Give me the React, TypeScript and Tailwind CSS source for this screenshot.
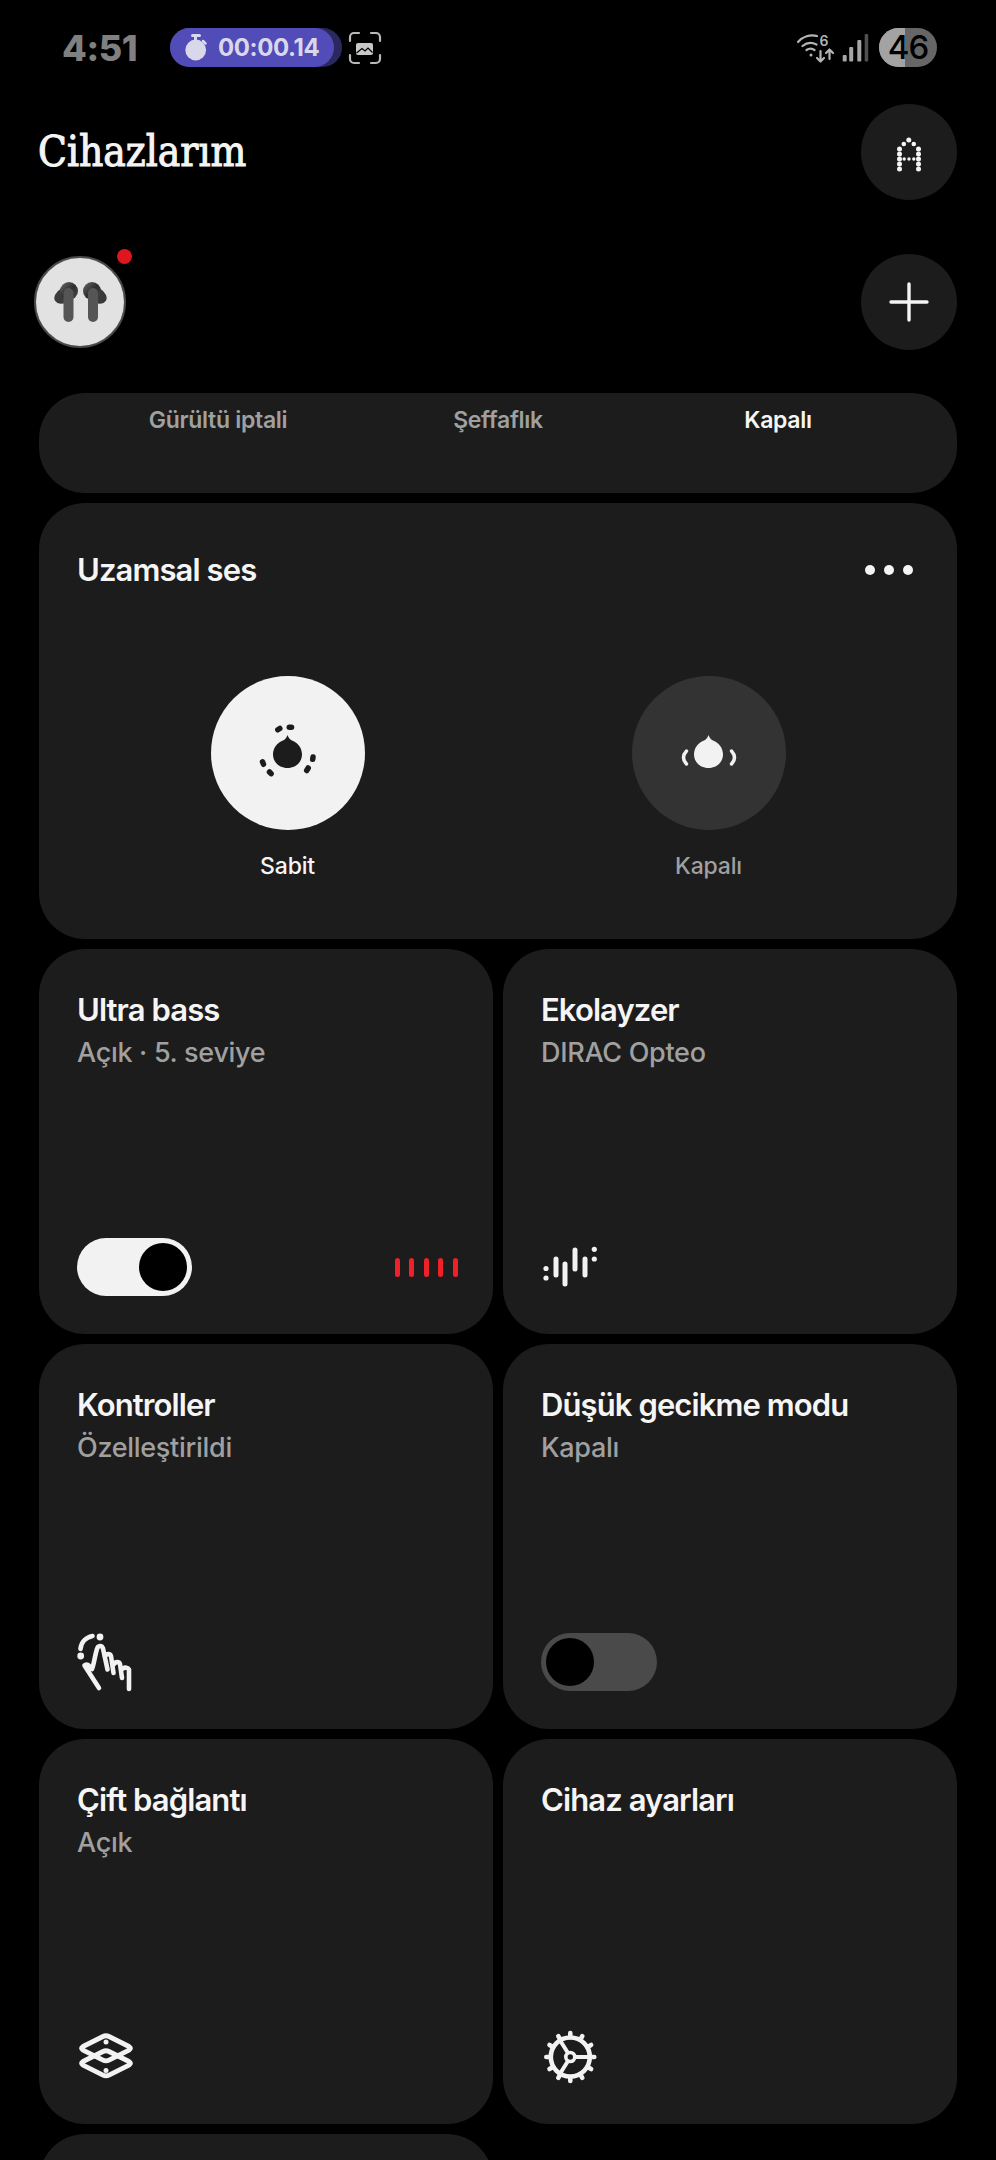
import type { ReactNode } from "react";

const FONT = "font-['Inter','Noto_Sans',sans-serif]";

function StopwatchIcon() {
  return (
    <svg width="24" height="30" viewBox="184 33 24 30" fill="none">
      <rect x="191" y="34" width="10" height="3" rx="1.5" fill="#d9d8ea" />
      <rect x="194" y="36" width="3" height="4" fill="#d9d8ea" />
      <circle cx="195.7" cy="50" r="10.4" fill="#d9d8ea" />
      <path d="M203 41l2.5 2.5" stroke="#d9d8ea" strokeWidth="2.5" strokeLinecap="round" />
    </svg>
  );
}

function ScreenshotIcon() {
  return (
    <svg width="34" height="34" viewBox="348 31 34 34" fill="none">
      <path
        d="M350 41v-4a4 4 0 0 1 4-4h5M371 33h5a4 4 0 0 1 4 4v4M380 55v4a4 4 0 0 1-4 4h-5M359 63h-5a4 4 0 0 1-4-4v-4"
        stroke="#b8b8b8"
        strokeWidth="2.2"
        strokeLinecap="round"
      />
      <path
        d="M358 43h13a2 2 0 0 1 2 2v8a2 2 0 0 1-2 2h-13a2 2 0 0 1-2-2v-8a2 2 0 0 1 2-2z"
        fill="#c8c8c8"
      />
      <path d="M356.5 53l5.5-4.500 3 2.500 3-3 4.500 4.500" stroke="#000" strokeWidth="1.2" fill="none" />
    </svg>
  );
}

function WifiIcon() {
  return (
    <svg width="40" height="32" viewBox="75 32 40 32" fill="none" stroke="#b4b4b4" strokeLinecap="round">
      <path d="M77 42a19 19 0 0 1 19-6" strokeWidth="2.2" />
      <path d="M81.5 46a13 13 0 0 1 14-1.5" strokeWidth="2.2" />
      <path d="M85.5 50a7 7 0 0 1 8 0" strokeWidth="2.2" />
      <circle cx="90" cy="55" r="1.5" fill="#b4b4b4" stroke="none" />
      <text x="98.5" y="46" fontSize="14" fontWeight="600" fill="#b4b4b4" stroke="none" fontFamily="Inter, sans-serif">
        6
      </text>
      <path d="M99.5 51v10M96 58l3.5 3.5 3.5-3.5" strokeWidth="2.2" strokeLinejoin="round" />
      <path d="M108.5 59v-9M105 53l3.5-3.5 3.5 3.5" strokeWidth="2.2" strokeLinejoin="round" />
    </svg>
  );
}

function SignalIcon() {
  return (
    <svg width="28" height="30" viewBox="121 33 28 30">
      <rect x="121.7" y="55" width="4" height="6.5" rx="1" fill="#a6a6a6" />
      <rect x="128.2" y="47" width="4" height="14.5" rx="1" fill="#a6a6a6" />
      <rect x="136.3" y="40" width="4" height="21.5" rx="1" fill="#a6a6a6" />
      <rect x="143.7" y="34" width="3.5" height="27.5" rx="1" fill="#505050" />
    </svg>
  );
}

function Battery() {
  return (
    <div className="relative flex h-[39px] w-[58px] items-center justify-center overflow-hidden rounded-full bg-[#666666]">
      <div className="absolute inset-y-0 left-0 w-[26px] bg-[#a3a3a3]" />
      <span className="relative text-[33px] leading-none font-medium tracking-[-1px] text-black">46</span>
    </div>
  );
}

function DottedA() {
  const left = [150, 155, 160, 165, 170];
  return (
    <svg width="40" height="40" viewBox="169.5 133 40 40" fill="#f4f4f4">
      <circle cx="189.3" cy="141" r="2.5" />
      <circle cx="184.3" cy="145" r="2.3" />
      <circle cx="194.3" cy="145" r="2.3" />
      {left.map((y) => (
        <g key={y}>
          <circle cx="180" cy={y} r="2.5" />
          <circle cx="199" cy={y} r="2.5" />
        </g>
      ))}
      <circle cx="184.7" cy="160" r="1.7" />
      <circle cx="189.5" cy="160" r="1.7" />
      <circle cx="194.3" cy="160" r="1.7" />
    </svg>
  );
}

function PlusIcon() {
  return (
    <svg width="40" height="40" viewBox="0 0 40 40" stroke="#f4f4f4" strokeWidth="3.4" strokeLinecap="round">
      <path d="M20 2v36M2 20h36" />
    </svg>
  );
}

function Earbuds() {
  return (
    <svg width="92" height="92" viewBox="34 256 92 92" className="absolute top-[-2px] left-[-2px]">
      <defs>
        <linearGradient id="bud" x1="0" y1="0" x2="1" y2="1">
          <stop offset="0" stopColor="#6a6a6a" />
          <stop offset="0.5" stopColor="#2e2e2e" />
          <stop offset="1" stopColor="#4a4a4a" />
        </linearGradient>
      </defs>
      <ellipse cx="65" cy="295" rx="11.5" ry="7.5" fill="#3a3a3a" transform="rotate(-30 65 295)" />
      <circle cx="69" cy="291" r="9" fill="url(#bud)" />
      <rect x="63.5" y="288" width="10" height="34" rx="5" fill="#555555" />
      <ellipse cx="96" cy="295" rx="11.5" ry="7.5" fill="#3a3a3a" transform="rotate(30 96 295)" />
      <circle cx="92" cy="291" r="9" fill="url(#bud)" />
      <rect x="88" y="288" width="10" height="34" rx="5" fill="#555555" />
    </svg>
  );
}

function Drop({ fill }: { fill: string }) {
  return (
    <path
      d="M76.5 59C77.5 62 79 63.5 81 64.5C87 67 91 72 91 78.5C91 86.5 84.5 92 76.5 92C68.5 92 62 86.5 62 78.5C62 72 66 67 72 64.5C74 63.5 75.5 62 76.5 59z"
      fill={fill}
    />
  );
}

function FixedIcon() {
  return (
    <svg width="154" height="154" viewBox="0 0 154 154" fill="none">
      <Drop fill="#1c1c1c" />
      <g stroke="#1c1c1c" strokeWidth="5.5" strokeLinecap="round">
        <path d="M66.8 53.8l2-1.3" />
        <path d="M78.3 51.3h2.2" />
        <path d="M51.5 85.8l1 2.5" />
        <path d="M58.5 96l1.6 1.7" />
        <path d="M95.7 94.5l1.5-2.5" />
        <path d="M101.7 83.3l.3-2.3" />
      </g>
    </svg>
  );
}

function OffIcon() {
  return (
    <svg width="154" height="154" viewBox="0 0 154 154" fill="none">
      <Drop fill="#f2f2f2" />
      <path d="M54.5 75Q48.5 81.5 54.5 88M99.5 75Q105.5 81.5 99.5 88" stroke="#f2f2f2" strokeWidth="3.4" strokeLinecap="round" />
    </svg>
  );
}

function Toggle({ on }: { on: boolean }) {
  return (
    <div
      className={
        on
          ? "flex h-[58px] w-[115px] items-center justify-end rounded-full bg-[#f2f2f2] px-[5px]"
          : "flex h-[58px] w-[116px] items-center justify-start rounded-full bg-[#4a4a4a] px-[5px]"
      }
    >
      <div className="h-[48px] w-[48px] rounded-full bg-black" />
    </div>
  );
}

function BassBars() {
  return (
    <div className="flex items-center gap-[9.5px]">
      {[0, 1, 2, 3, 4].map((i) => (
        <div key={i} className="h-[19px] w-[5px] rounded-full bg-[#ee2129]" />
      ))}
    </div>
  );
}

function EqIcon() {
  return (
    <svg width="60" height="46" viewBox="21 24 60 46" fill="none" stroke="#f2f2f2" strokeLinecap="round">
      <path d="M36 39v16M45 44v20M55 30v19M65 39v16" strokeWidth="5" />
      <circle cx="26" cy="48.5" r="2.6" fill="#f2f2f2" stroke="none" />
      <circle cx="26" cy="58" r="2.6" fill="#f2f2f2" stroke="none" />
      <circle cx="74.3" cy="29.3" r="2.6" fill="#f2f2f2" stroke="none" />
      <circle cx="74.3" cy="39" r="2.6" fill="#f2f2f2" stroke="none" />
    </svg>
  );
}

function TouchIcon() {
  return (
    <svg width="60" height="62" viewBox="27 30 60 62" fill="none" stroke="#f2f2f2" strokeWidth="4.6" strokeLinecap="round" strokeLinejoin="round">
      <path d="M30.5 48c.5-6.5 5-11.5 12-13" />
      <circle cx="30.7" cy="55" r="3.4" fill="#f2f2f2" stroke="none" />
      <circle cx="50" cy="36" r="3.4" fill="#f2f2f2" stroke="none" />
      <path d="M49 87L34.5 64.5c3-3 5.5 2 7.5 3.5 2-5 3-14 5-20 1-4 5-4 6-.5l4.5 21" />
      <path d="M55 55c1.5-2.5 5-2.5 6 0l2.5 17" />
      <path d="M64 63c1.5-2.5 5-2.5 6 0l2 14" />
      <path d="M73 67.5c2-1.5 5-1 6 1V88" />
    </svg>
  );
}

function LayersIcon() {
  return (
    <svg width="62" height="52" viewBox="27 21 62 52" fill="none" stroke="#f2f2f2" strokeWidth="4.8" strokeLinejoin="round">
      <path d="M53 26.5q3-1.5 6 0l20 10q3 1.8 0 3.6l-20 10q-3 1.5-6 0l-20-10q-3-1.8 0-3.6z" />
      <path d="M53 41.5q3-1.5 6 0l20 10q3 1.8 0 3.6l-20 10q-3 1.5-6 0l-20-10q-3-1.8 0-3.6z" />
      <circle cx="56" cy="32" r="2.5" fill="#f2f2f2" stroke="none" />
      <circle cx="56" cy="60.5" r="2.5" fill="#f2f2f2" stroke="none" />
    </svg>
  );
}

function GearIcon() {
  const teeth = [0, 30, 60, 90, 120, 150, 180, 210, 240, 270, 300, 330];
  return (
    <svg width="58" height="58" viewBox="21 27 58 58" fill="none" stroke="#f2f2f2">
      <circle cx="50.3" cy="56" r="19.5" strokeWidth="4.6" />
      {teeth.map((a) => (
        <path key={a} d="M50.3 36v-4" strokeWidth="4.6" strokeLinecap="round" transform={`rotate(${a} 50.3 56)`} />
      ))}
      <circle cx="50.3" cy="56" r="4.5" strokeWidth="3.6" />
      <path d="M54.5 56h16M48 52L39.8 39M48 60L39.8 73" strokeWidth="4" />
    </svg>
  );
}

function Card({ title, sub, children }: { title: string; sub?: string; children?: ReactNode }) {
  return (
    <div className="flex h-[385px] flex-col justify-between rounded-[46px] bg-[#1c1c1c] pt-[41px] pr-[35.5px] pb-[38px] pl-[38px]">
      <div>
        <div className="text-[31px] leading-[40px] font-semibold tracking-[-0.9px] text-[#f5f5f5]">{title}</div>
        {sub && <div className="mt-[3px] text-[27px] leading-[40px] font-medium tracking-[-0.3px] text-[#a0a0a0]">{sub}</div>}
      </div>
      <div className="flex h-[58px] items-center justify-between">{children}</div>
    </div>
  );
}

export default function App() {
  return (
    <div className={`${FONT} h-[2160px] w-[996px] overflow-hidden bg-black`}>
      {/* Status bar */}
      <div className="flex h-[104px] items-start justify-between pt-[28px] pr-[59px] pl-[62px]">
        <div className="flex h-[39px] items-center">
          <span className="w-[108px] text-[36px] leading-none font-extrabold tracking-[-0.4px] text-[#808080]">4:51</span>
          <div className="flex h-[39px] w-[172px] rounded-full bg-[#2b2860]">
            <div className="flex h-[39px] w-[164px] items-center gap-[10px] rounded-full bg-[#524cb8] pl-[14px]">
              <StopwatchIcon />
              <span className="text-[24px] leading-none font-bold tracking-[-0.4px] text-[#d9d8ea]">00:00.14</span>
            </div>
          </div>
          <div className="ml-[6px]">
            <ScreenshotIcon />
          </div>
        </div>
        <div className="flex h-[39px] items-center">
          <WifiIcon />
          <div className="mr-[9px] ml-[6px]">
            <SignalIcon />
          </div>
          <Battery />
        </div>
      </div>

      {/* Header */}
      <div className="flex h-[96px] items-center justify-between pr-[39px] pl-[38px]">
        <h1 className="font-['DejaVu_Serif_Condensed','DejaVu_Serif',serif] text-[42px] leading-[96px] font-normal text-[#f4f4f4] [-webkit-text-stroke:1px_#f4f4f4]">
          Cihazlarım
        </h1>
        <div className="flex h-[96px] w-[96px] items-center justify-center rounded-full bg-[#1c1c1c]">
          <DottedA />
        </div>
      </div>

      {/* Device row */}
      <div className="mt-[54px] flex h-[96px] items-center justify-between pr-[39px] pl-[34px]">
        <div className="relative h-[92px] w-[92px] rounded-full border-[2px] border-[#4a4a4a] bg-[#e2e2e2]">
          <Earbuds />
          <div className="absolute top-[-9px] right-[-8px] h-[15px] w-[15px] rounded-full bg-[#e0161e]" />
        </div>
        <div className="flex h-[96px] w-[96px] items-center justify-center rounded-full bg-[#1c1c1c]">
          <PlusIcon />
        </div>
      </div>

      <div className="mt-[43px] flex flex-col gap-[10px] px-[39px]">
        {/* Noise modes */}
        <div className="grid h-[100px] grid-cols-3 rounded-[46px] bg-[#1c1c1c] px-[39px] pt-[12px] text-center text-[23px] leading-[30px] font-semibold tracking-[-0.3px]">
          <span className="text-[#a0a0a0]">Gürültü iptali</span>
          <span className="text-[#a0a0a0]">Şeffaflık</span>
          <span className="text-[#f5f5f5]">Kapalı</span>
        </div>

        {/* Spatial audio */}
        <div className="h-[436px] rounded-[46px] bg-[#1c1c1c] px-[38px] pt-[47px]">
          <div className="flex h-[40px] items-center justify-between">
            <span className="text-[31px] leading-[40px] font-semibold tracking-[-0.9px] text-[#f5f5f5]">Uzamsal ses</span>
            <div className="flex gap-[9px] pr-[6px]">
              <div className="h-[10px] w-[10px] rounded-full bg-[#f5f5f5]" />
              <div className="h-[10px] w-[10px] rounded-full bg-[#f5f5f5]" />
              <div className="h-[10px] w-[10px] rounded-full bg-[#f5f5f5]" />
            </div>
          </div>
          <div className="mt-[86px] grid grid-cols-2">
            <div className="flex flex-col items-center">
              <div className="h-[154px] w-[154px] rounded-full bg-[#f2f2f2]">
                <FixedIcon />
              </div>
              <span className="mt-[21px] text-[23px] leading-[30px] font-medium tracking-[-0.2px] text-[#f5f5f5]">Sabit</span>
            </div>
            <div className="flex flex-col items-center">
              <div className="h-[154px] w-[154px] rounded-full bg-[#333333]">
                <OffIcon />
              </div>
              <span className="mt-[21px] text-[23px] leading-[30px] font-medium tracking-[-0.2px] text-[#a0a0a0]">Kapalı</span>
            </div>
          </div>
        </div>

        {/* Feature cards */}
        <div className="grid grid-cols-2 gap-[10px]">
          <Card title="Ultra bass" sub="Açık · 5. seviye">
            <Toggle on />
            <BassBars />
          </Card>
          <Card title="Ekolayzer" sub="DIRAC Opteo">
            <EqIcon />
          </Card>
          <Card title="Kontroller" sub="Özelleştirildi">
            <TouchIcon />
          </Card>
          <Card title="Düşük gecikme modu" sub="Kapalı">
            <Toggle on={false} />
          </Card>
          <Card title="Çift bağlantı" sub="Açık">
            <LayersIcon />
          </Card>
          <Card title="Cihaz ayarları">
            <GearIcon />
          </Card>
          <Card title="" />
        </div>
      </div>
    </div>
  );
}
